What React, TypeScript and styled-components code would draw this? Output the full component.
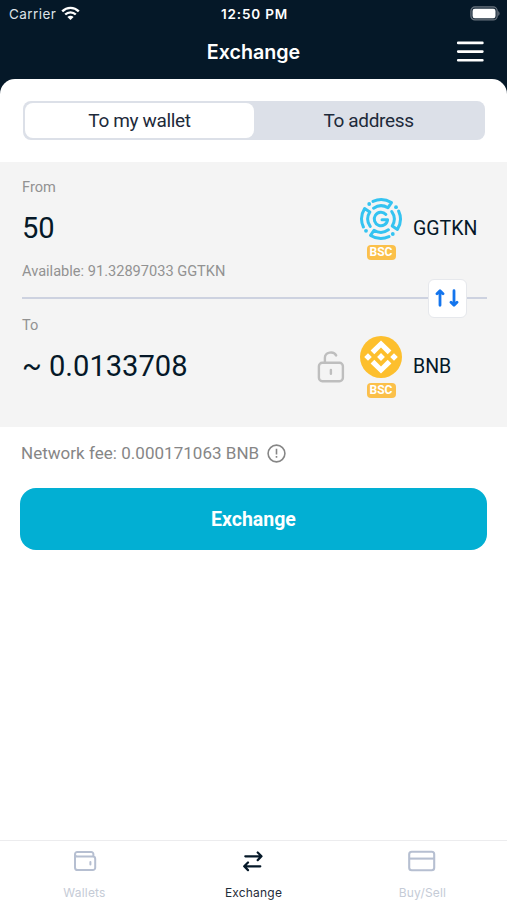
import React from "react";
import styled, { createGlobalStyle } from "styled-components";

const GlobalStyle = createGlobalStyle`
  * { box-sizing: border-box; }
  body { margin: 0; background: #051828; font-family: Roboto, sans-serif; color: #051828; }
  button { border: 0; padding: 0; background: none; font: inherit; color: inherit; }
  svg { display: block; flex: none; }
`;

const Screen = styled.div`
  width: 507px;
  height: 900px;
  display: flex;
  flex-direction: column;
  background: #051828;
  overflow: hidden;
`;

const StatusBar = styled.div`
  height: 27px;
  display: grid;
  grid-template-columns: 1fr auto 1fr;
  align-items: center;
  padding: 0 7px 0 9px;
  color: #fff;
  font-family: Inter, sans-serif;
  font-size: 13.5px;
`;

const Carrier = styled.div`
  display: flex;
  align-items: center;
  gap: 5px;
  color: #dde2e6;
  letter-spacing: 0.45px;
`;

const Clock = styled.div`
  font-weight: 600;
  font-size: 13.5px;
  letter-spacing: 0.8px;
`;

const Battery = styled.div`
  justify-self: end;
`;

const TitleBar = styled.header`
  height: 52px;
  display: grid;
  grid-template-columns: 1fr auto 1fr;
  align-items: center;
  padding: 0 23px 3px;
`;

const Title = styled.h1`
  grid-column: 2;
  margin: 0;
  color: #fff;
  font-family: Inter, sans-serif;
  font-size: 19.7px;
  font-weight: 600;
  line-height: 24px;
`;

const MenuButton = styled.button`
  justify-self: end;
`;

const Sheet = styled.main`
  flex: 1;
  display: flex;
  flex-direction: column;
  background: #fff;
  border-radius: 15px 15px 0 0;
`;

const Segments = styled.div`
  margin: 22px 22px 22px 23px;
  height: 39px;
  flex: none;
  padding: 2px;
  display: grid;
  grid-template-columns: 229px 1fr;
  background: #dce0e8;
  border-radius: 8px;
`;

const Segment = styled.button<{ $active?: boolean }>`
  background: ${(p) => (p.$active ? "#fff" : "transparent")};
  border-radius: 8px;
  color: #1d2a3a;
  font-size: 19px;
  line-height: 35px;
  letter-spacing: -0.35px;
`;

const Panel = styled.section`
  height: 265px;
  flex: none;
  padding: 16px 20px 0 22px;
  background: #f4f4f4;
`;

const Side = styled.div`
  height: 102.5px;
  display: flex;
  justify-content: space-between;
`;

const Amounts = styled.div`
  display: flex;
  flex-direction: column;
`;

const Label = styled.div`
  color: #929292;
  font-size: 14.6px;
  line-height: 18px;
`;

const Amount = styled.div`
  margin: 14px 0 15px;
  font-size: 29.1px;
  line-height: 37px;
`;

const Asset = styled.div`
  display: flex;
  padding-top: 19px;
`;

const CoinColumn = styled.div`
  width: 44px;
  margin-top: -0.5px;
  display: flex;
  flex-direction: column;
  align-items: center;
  gap: 4px;
`;

const ChainTag = styled.span`
  width: 29px;
  height: 15px;
  border-radius: 4px;
  background: #fbc04a;
  color: #fff;
  font-size: 12px;
  font-weight: 700;
  line-height: 15.5px;
  text-align: center;
`;

const Ticker = styled.div`
  width: 74px;
  margin: 20px 0 0 10px;
  font-size: 19.5px;
  line-height: 24px;
`;

const LockSlot = styled.div`
  margin: 16px 14.5px 0 0;
`;

const Divider = styled.div`
  height: 35.5px;
  display: flex;
  align-items: center;
`;

const Rule = styled.span<{ $width?: number }>`
  height: 2px;
  ${(p) => (p.$width ? `width: ${p.$width}px;` : "flex: 1;")}
  background: #cdd2e0;
`;

const SwapButton = styled.button`
  width: 39px;
  height: 39px;
  display: grid;
  place-items: center;
  background: #fff;
  border: 1px solid #e6e8ec;
  border-radius: 6px;
`;

const Fee = styled.div`
  display: flex;
  align-items: center;
  gap: 8px;
  height: 20px;
  margin: 16px 0 25px 21px;
  color: #868686;
  font-size: 17px;
  letter-spacing: 0.03px;
`;

const Submit = styled.button`
  flex: none;
  height: 62px;
  margin: 0 20px;
  border-radius: 16px;
  background: #02afd3;
  color: #fff;
  font-size: 19.5px;
  font-weight: 700;
`;

const TabBar = styled.nav`
  height: 60px;
  margin-top: auto;
  display: grid;
  grid-template-columns: repeat(3, 1fr);
  border-top: 1px solid #ececee;
`;

const Tab = styled.button<{ $active?: boolean }>`
  display: flex;
  flex-direction: column;
  align-items: center;
  padding-top: 8px;
  gap: 12px;
  color: ${(p) => (p.$active ? "#051828" : "#b6bfd1")};
  font-family: Inter, sans-serif;
  font-size: 12px;
  line-height: 16px;
  letter-spacing: 0.2px;
`;

const TabLabel = styled.span<{ $active?: boolean }>`
  color: ${(p) => (p.$active ? "#1f2c3a" : "#c5cbd6")};
`;

const WifiIcon = () => (
  <svg width="19" height="15" viewBox="0 0 19 15" fill="none" stroke="#fff" strokeWidth="2.4">
    <path d="M1.2 5.4C5.9.7 13.1.7 17.8 5.4" />
    <path d="M4.2 8.5c3-2.9 7.6-2.9 10.6 0" />
    <path d="M9.5 14 6.4 10.9c1.7-1.5 4.5-1.5 6.2 0Z" fill="#fff" stroke="none" />
  </svg>
);

const BatteryIcon = () => (
  <svg width="30" height="15" viewBox="0 0 30 15">
    <rect x=".9" y=".9" width="26.3" height="13" rx="4" fill="#1f303f" stroke="#69737e" strokeWidth="1.2" />
    <rect x="2.6" y="2.7" width="22.9" height="9.5" rx="2.2" fill="#fff" />
    <path d="M28.2 5.2c1.8.7 1.8 3.9 0 4.6Z" fill="#69737e" />
  </svg>
);

const MenuIcon = () => (
  <svg width="28" height="22" viewBox="0 0 28 22" stroke="#fff" strokeWidth="2.6" strokeLinecap="round">
    <path d="M2.2 1.9h24.2M2.2 10.6h24.2M2.2 19.3h24.2" />
  </svg>
);

const GgtknIcon = () => (
  <svg width="44" height="44" viewBox="-22 -22 44 44" fill="none" stroke="#34c3f1" strokeWidth="3" strokeLinejoin="round" strokeLinecap="round">
    <path d="M-8-17.6A19.4 19.4 0 0 1 10.4-16.4L7-11.2A13 13 0 0 0-7.4-10.8" />
    <path d="M8 17.6A19.4 19.4 0 0 1-10.4 16.4L-7 11.2A13 13 0 0 0 7.4 10.8" />
    <path d="M-17.6 8A19.4 19.4 0 0 1-16.4-10.4L-11.2-7A13 13 0 0 0-10.8 7.4" />
    <path d="M17.6-8A19.4 19.4 0 0 1 16.4 10.4L11.2 7A13 13 0 0 0 10.8-7.4" />
    <path d="M4.9-4.5A6.7 6.7 0 1 0 6.6 .8H1" />
    <g fill="#34c3f1" stroke="none">
      <circle cx="-11.8" cy="-15" r="1.9" />
      <circle cx="15" cy="-11.8" r="1.9" />
      <circle cx="11.8" cy="15" r="1.9" />
      <circle cx="-15" cy="11.8" r="1.9" />
    </g>
  </svg>
);

const BnbIcon = () => (
  <svg width="44" height="44" viewBox="-22 -22 44 44" fill="#fff">
    <circle r="21" fill="#fdbf2d" />
    <path d="M0-16.6 10.4-6.4 6.7-2.8 0-9.4-6.7-2.8-10.4-6.4Z" />
    <path d="M0 16.6 10.4 6.4 6.7 2.8 0 9.4-6.7 2.8-10.4 6.4Z" />
    <path d="M0-3.9 3.9 0 0 3.9-3.9 0ZM-13-3.8-9.2 0-13 3.8-16.8 0ZM13-3.8 16.8 0 13 3.8 9.2 0Z" />
  </svg>
);

const LockIcon = () => (
  <svg width="28" height="32" viewBox="0 0 28 32" fill="none" stroke="#bebebe" strokeWidth="2.4" strokeLinecap="round">
    <rect x="1.9" y="11.8" width="24" height="18.4" rx="3.4" />
    <path d="M7.9 11.5V6.8c0-5.8 8.8-7.2 11.2-2.4" />
    <path d="M13.9 19v3.7" />
  </svg>
);

const SwapIcon = () => (
  <svg width="26" height="18" viewBox="0 0 26 18" fill="none" stroke="#1475ed" strokeWidth="2.8" strokeLinecap="round" strokeLinejoin="round">
    <path d="M5 16.3V3M2 4.8 5 1.8 8 4.8" />
    <path d="M19 1.7V15M16 13.2l3 3 3-3" />
  </svg>
);

const InfoIcon = () => (
  <svg width="19" height="19" viewBox="0 0 19 19" fill="none" stroke="#868686" strokeWidth="1.6">
    <circle cx="9.5" cy="9.5" r="8.4" />
    <path d="M9.5 4.8v5.7M9.5 12v1.8" />
  </svg>
);

const WalletIcon = () => (
  <svg width="24" height="24" viewBox="0 0 24 24" fill="none" stroke="currentColor" strokeWidth="2" strokeLinecap="round" strokeLinejoin="round">
    <path d="M2 5.2v13.2a2.7 2.7 0 0 0 2.7 2.7h15.1a2.4 2.4 0 0 0 2.4-2.4V9.8a2.4 2.4 0 0 0-2.4-2.4H4.2A2.2 2.2 0 0 1 4.2 3h14a2.2 2.2 0 0 1 2.2 2.2v2.2M17.4 13v2.4" />
  </svg>
);

const ExchangeIcon = () => (
  <svg width="24" height="24" viewBox="0 0 24 24" fill="none" stroke="currentColor" strokeWidth="2.2" strokeLinecap="round" strokeLinejoin="round">
    <path d="M3.3 7.3h15.8M15.7 3.5l3.8 3.8-3.8 3.8M18.3 17.3H2.4M6 13.5l-3.8 3.8L6 21.1" />
  </svg>
);

const CardIcon = () => (
  <svg width="30" height="24" viewBox="0 0 30 24" fill="none" stroke="currentColor" strokeWidth="2.1">
    <rect x="1.2" y="2.8" width="25" height="18.4" rx="2.5" />
    <path d="M1.2 9.6h25" />
  </svg>
);

type CurrencyProps = {
  label: string;
  amount: string;
  available?: string;
  ticker: string;
  icon: React.ReactNode;
  locked?: boolean;
};

const CurrencySide = ({ label, amount, available, ticker, icon, locked }: CurrencyProps) => (
  <Side>
    <Amounts>
      <Label>{label}</Label>
      <Amount>{amount}</Amount>
      {available && <Label>{available}</Label>}
    </Amounts>
    <Asset>
      {locked && <LockSlot><LockIcon /></LockSlot>}
      <CoinColumn>
        {icon}
        <ChainTag>BSC</ChainTag>
      </CoinColumn>
      <Ticker>{ticker}</Ticker>
    </Asset>
  </Side>
);

export default function App() {
  return (
    <Screen>
      <GlobalStyle />
      <StatusBar>
        <Carrier>Carrier <WifiIcon /></Carrier>
        <Clock>12:50 PM</Clock>
        <Battery><BatteryIcon /></Battery>
      </StatusBar>
      <TitleBar>
        <Title>Exchange</Title>
        <MenuButton aria-label="Menu"><MenuIcon /></MenuButton>
      </TitleBar>
      <Sheet>
        <Segments>
          <Segment $active>To my wallet</Segment>
          <Segment>To address</Segment>
        </Segments>
        <Panel>
          <CurrencySide label="From" amount="50" available="Available: 91.32897033 GGTKN" ticker="GGTKN" icon={<GgtknIcon />} />
          <Divider>
            <Rule />
            <SwapButton aria-label="Swap currencies"><SwapIcon /></SwapButton>
            <Rule $width={20} />
          </Divider>
          <CurrencySide label="To" amount="~ 0.0133708" ticker="BNB" icon={<BnbIcon />} locked />
        </Panel>
        <Fee>Network fee: 0.000171063 BNB <InfoIcon /></Fee>
        <Submit>Exchange</Submit>
        <TabBar>
          <Tab><WalletIcon /><TabLabel>Wallets</TabLabel></Tab>
          <Tab $active><ExchangeIcon /><TabLabel $active>Exchange</TabLabel></Tab>
          <Tab><CardIcon /><TabLabel>Buy/Sell</TabLabel></Tab>
        </TabBar>
      </Sheet>
    </Screen>
  );
}
